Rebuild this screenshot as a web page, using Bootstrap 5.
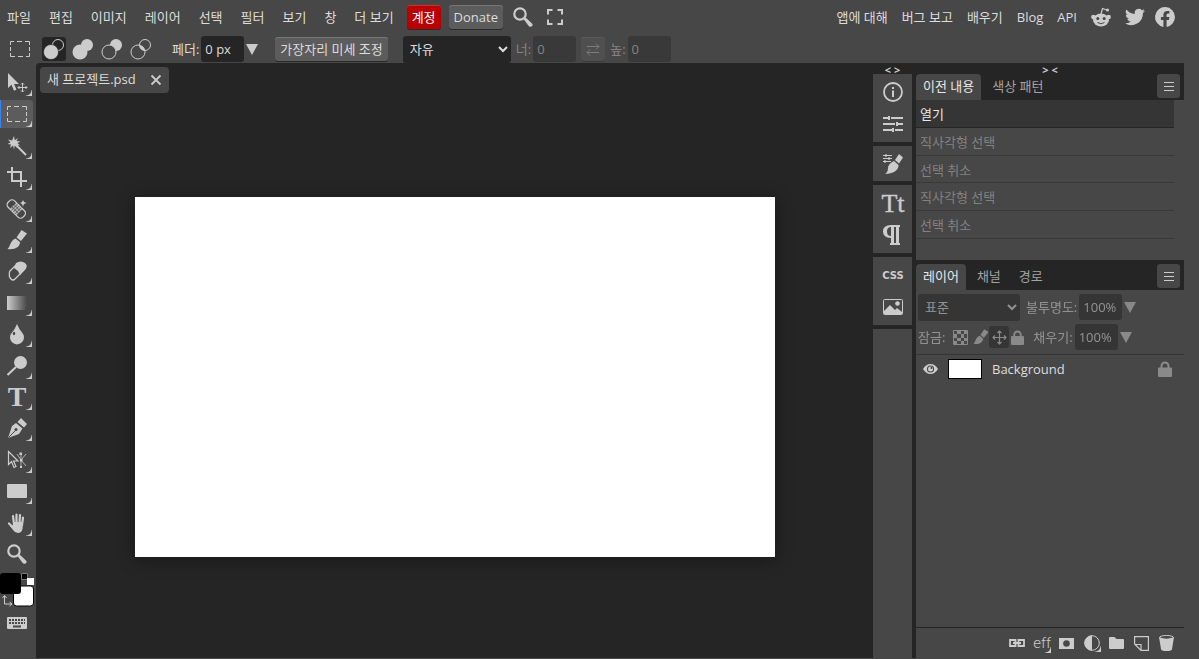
<!DOCTYPE html>
<html lang="ko">
<head>
<meta charset="utf-8">
<meta name="viewport" content="width=device-width, initial-scale=1">
<title>새 프로젝트.psd</title>
<link href="https://cdn.jsdelivr.net/npm/bootstrap@5.3.0/dist/css/bootstrap.min.css" rel="stylesheet">
<style>
:root{--base:#474747;--dark:#252525;--ink:#dddddd;--icon:#cccccc}
body{background:var(--base);color:var(--ink);font:13px/18px "Open Sans","Noto Sans CJK KR",sans-serif;overflow:hidden}
button,input,select{font:inherit;color:inherit}
svg{display:block;fill:var(--icon);flex:none;overflow:visible}
svg .ln{fill:none;stroke:var(--icon)}
a{color:inherit;text-decoration:none}
.plain{background:none;border:0;padding:0;border-radius:3px}
.topbar{height:33px;padding:0 24px 0 7px}
.menus{gap:18px;margin-right:13px}
.links{gap:14px}
.links a:last-child{margin-left:-4px}
.topicons{gap:14px;margin-left:10px}
.pushbtn{background:#5c5c5c;border:0;border-radius:3px;padding:0 5px;height:24px;box-shadow:inset 0 1px #757575,0 1px #2b2b2b}
.account{background:#bb0000;color:#fff;box-shadow:inset 0 1px #cc3333,0 1px #2b2b2b}
.optbar{height:30px;padding:2px 0 0 10px}
.modes{gap:5px;margin:0 19px 0 12px}
.refine{margin:0 15px 0 17px}
.fieldset-row{display:flex;align-items:center;gap:2px}
.mode{width:24px;height:24px}
.mode.active{background:var(--dark)}
.field{background:var(--dark);border:0;border-radius:3px;width:43px;height:26px;padding:0 4px}
.dropdown-field{background:var(--dark);border:0;border-radius:3px;height:27px;padding:0 3px}
.style-select{width:108px}
.blend-select{width:102px}
.sizes{opacity:.4;gap:5px;padding-left:5px}
.half{opacity:.5}
.toolbox{width:36px;padding-top:6px}
.tool{position:relative;width:33px;height:28px;margin-bottom:3px;padding-left:7px;display:flex;align-items:center;border-radius:0 4px 4px 0}
.tool:nth-child(5n+2),.tool:nth-child(5n+4){margin-bottom:4px}
.tool.active{background:#5c5c5c;box-shadow:inset 1px 0 #3b82f6}
.more::after{content:"";position:absolute;right:1px;bottom:1px;width:6px;height:6px;background:radial-gradient(circle at 0 0,transparent 5px,var(--icon) 6px)}
.swatches{margin:4px 0 9px}
.keys{margin-left:7px}
.stage{background:var(--dark);border-top-left-radius:4px;margin-bottom:1px}
.doctabs{height:33px;padding:4px}
.doctab{background:var(--base);border-radius:4px;height:26px;padding:0 8px 0 7px;gap:15px}
.doctab span{padding-bottom:2px}
.artboard{width:640px;height:360px;background:#fff;box-shadow:0 2px 16px #0006}
.dock{width:39px;background:var(--dark)}
.grip{height:11px;font-size:11px;line-height:11px;font-weight:700;padding-top:1px;text-align:center;color:var(--icon)}
.dockgroup{background:var(--base);padding:2px 0;margin-bottom:4px}
.dockgroup.single{padding-bottom:1px}
.dockgroup button{height:32px;width:39px;display:flex;align-items:center;justify-content:center}
.side{width:272px;background:var(--dark);padding-left:4px}
.tabs{height:26px;gap:4px}
.paneltab{height:26px;padding:0 7px 2px;border-radius:4px 4px 0 0;color:#a3a3a3}
.paneltab.active{background:var(--base);color:#e8e8e8}
.panelmenu{background:var(--base);width:23px;height:24px;margin-right:4px;display:flex;align-items:center;justify-content:center}
.panelbody{background:var(--base)}
.history{height:160px;margin-bottom:4px}
.history ul{margin-right:10px}
.history li{height:28px;line-height:28px;padding:0 4px;border-bottom:1px solid #393939;color:#828282}
.history li:nth-child(3){height:27px}
.history li.active{background:#353535;color:#e8e8e8;border-color:#252525}
.layerprops{padding:2px 0 2px 2px}
.blend{height:30px;gap:6px}
.locks{height:30px}
.lockset{gap:2px;margin:0 9px 0 8px}
.lockset button:first-child{margin-right:3px}
.layer{height:28px;border-top:1px solid #353535;padding:0 12px 0 7px;gap:10px}
.thumb{width:34px;height:20px;background:#fff;border:1px solid #000}
.actions{height:31px;border-top:1px solid #252525;padding:0 9px;gap:9px}
.actions button{width:16px;position:relative}
.actions .more::after{right:-1px;bottom:-1px}
.pinned{background:var(--dark);width:20px;height:22px;display:flex;align-items:center;justify-content:center}
.edge{width:15px}
</style>
<script src="https://cdn.jsdelivr.net/npm/bootstrap@5.3.0/dist/js/bootstrap.bundle.min.js"></script>
</head>
<body class="vh-100 d-flex flex-column">
<svg width="0" height="0" class="position-absolute" aria-hidden="true">
  <symbol id="glass" viewBox="0 0 20 20"><circle cx="7" cy="7" r="5.7" fill="none" stroke="#ccc" stroke-width="2.2"/><path d="M10.5 12l1.5-1.500 2 1.200 5 4.800q1.500 2-.5 3t-3-.8L12 14z"/></symbol>
  <symbol id="brush" viewBox="0 0 20 20"><path d="M14.500 0L20 3.500 14 11 9.500 7.500zM8.500 8.500L13 12c0 5-5 8-12.500 7 3-2 2-8 8-10.500z"/></symbol>
  <symbol id="lock" viewBox="0 0 14 16"><path d="M1 6.500h1.500V5a4.500 4.500 0 0 1 9 0v1.500H13q1 0 1 1V15q0 1-1 1H1q-1 0-1-1V7.500q0-1 1-1zm3.500 0h5V5a2.500 2.500 0 0 0-5 0z"/></symbol>
  <symbol id="down" viewBox="0 0 12 12"><path d="M0 1h12L6 12z"/></symbol>
  <symbol id="marquee" viewBox="0 0 20 16"><path d="M0.500 4V.5H4M7 .5h5M15 .5h4.500V4M19.500 6v4M19.500 12v3.500H16M13 15.500H8M5 15.500H.5V12M.5 10V6" fill="none" stroke="#ccc"/></symbol>
</svg>

<header>
  <div class="topbar d-flex align-items-center justify-content-between">
    <div class="d-flex align-items-center">
      <nav class="menus d-flex text-nowrap" aria-label="메뉴">
        <button class="plain">파일</button><button class="plain">편집</button><button class="plain">이미지</button><button class="plain">레이어</button><button class="plain">선택</button><button class="plain">필터</button><button class="plain">보기</button><button class="plain">창</button><button class="plain">더 보기</button>
      </nav>
      <button class="pushbtn account me-2">계정</button>
      <button class="pushbtn">Donate</button>
      <div class="topicons d-flex align-items-center">
        <button class="plain" aria-label="검색"><svg width="20" height="20"><use href="#glass"/></svg></button>
        <button class="plain" aria-label="전체 화면"><svg width="16" height="16" viewBox="0 0 16 16"><path class="ln" stroke-width="2" d="M1 5.500V1h4.500M10.500 1H15v4.500M15 10.500V15h-4.500M5.500 15H1v-4.500"/></svg></button>
      </div>
    </div>
    <nav class="links d-flex align-items-center text-nowrap" aria-label="링크">
      <a href="#">앱에 대해</a><a href="#">버그 보고</a><a href="#">배우기</a><a href="#">Blog</a><a href="#">API</a>
      <a href="#" aria-label="Reddit"><svg width="20" height="20" viewBox="0 0 20 20"><path class="ln" stroke-width="1.200" d="M10 7l1.500-5.500L16 3"/><circle cx="16.500" cy="3" r="1.600"/><circle cx="2.300" cy="10" r="2.200"/><circle cx="17.700" cy="10" r="2.200"/><ellipse cx="10" cy="13" rx="8" ry="6.500"/><g fill="#474747"><circle cx="6.800" cy="11.500" r="1.500"/><circle cx="13.200" cy="11.500" r="1.500"/></g><path d="M6.500 15.500q3.500 2.500 7 0" fill="none" stroke="#474747"/></svg></a>
      <a href="#" aria-label="Twitter"><svg width="20" height="20" viewBox="0 0 24 24"><path d="M24 4.600a10 10 0 0 1-2.800.8 5 5 0 0 0 2.100-2.700 10 10 0 0 1-3.100 1.200 4.900 4.900 0 0 0-8.400 4.500A14 14 0 0 1 1.700 3.100a4.900 4.900 0 0 0 1.500 6.600 5 5 0 0 1-2.200-.6 4.900 4.900 0 0 0 4 4.900 5 5 0 0 1-2.300.1 4.900 4.900 0 0 0 4.600 3.400A10 10 0 0 1 0 19.500 14 14 0 0 0 21.500 7.100 10 10 0 0 0 24 4.600z"/></svg></a>
      <a href="#" aria-label="Facebook"><svg width="20" height="20" viewBox="0 0 24 24"><path d="M24 12a12 12 0 1 0-13.900 11.900v-8.400H7.100V12h3V9.400c0-3 1.800-4.700 4.500-4.700 1.300 0 2.700.2 2.700.2v3h-1.500c-1.500 0-2 .9-2 1.900V12h3.400l-.5 3.500h-2.800v8.400A12 12 0 0 0 24 12z"/></svg></a>
    </nav>
  </div>
  <div class="optbar d-flex align-items-center text-nowrap">
    <svg width="20" height="16"><use href="#marquee"/></svg>
    <div class="modes d-flex">
      <button class="plain mode active" aria-label="새 선택"><svg width="24" height="24" viewBox="0 0 24 24"><circle class="ln" cx="16" cy="8" r="5.500"/><circle cx="9" cy="15" r="7.500" stroke="#252525" stroke-width=".6"/></svg></button>
      <button class="plain mode" aria-label="더하기"><svg width="24" height="24" viewBox="0 0 24 24"><circle cx="16" cy="8" r="6"/><circle cx="9" cy="15" r="7.500"/></svg></button>
      <button class="plain mode" aria-label="빼기"><svg width="24" height="24" viewBox="0 0 24 24"><circle cx="16" cy="8" r="6"/><circle cx="9" cy="15" r="7" fill="#474747" stroke="#ccc"/></svg></button>
      <button class="plain mode" aria-label="교차"><svg width="24" height="24" viewBox="0 0 24 24"><path d="M10.300 8.200Q15.500 9 16 13.700 11 13.500 10.300 8.200z"/><circle class="ln" cx="16" cy="8" r="5.500"/><circle class="ln" cx="9" cy="15" r="7"/></svg></button>
    </div>
    <div class="fieldset-row"><label for="feather">페더:</label><input id="feather" class="field" value="0 px"><button class="plain" aria-label="페더 값"><svg width="12" height="12"><use href="#down"/></svg></button></div>
    <button class="pushbtn refine">가장자리 미세 조정</button>
    <select class="dropdown-field style-select" aria-label="스타일"><option>자유</option></select>
    <div class="sizes d-flex align-items-center">
      <div class="fieldset-row"><label for="wd">너:</label><input id="wd" class="field" value="0"></div>
      <button class="pushbtn" aria-label="교환"><svg width="14" height="14" viewBox="0 0 14 14"><path class="ln" d="M1 4.500h12M10 1.500l3 3-3 3M13 10.500H1M4 7.500l-3 3 3 3"/></svg></button>
      <div class="fieldset-row"><label for="ht">높:</label><input id="ht" class="field" value="0"></div>
    </div>
  </div>
</header>

<main class="d-flex flex-grow-1">
  <aside class="toolbox flex-shrink-0" aria-label="도구">
    <div>
      <button class="plain tool more" aria-label="이동"><svg width="20" height="20" viewBox="0 0 20 20"><path d="M1 0v15l3.500-3.300 2.500 6 2.500-1.200L7 11h5z"/><path class="ln" d="M15.500 10v9M11 14.500h9M14 11.500l1.500-1.500 1.500 1.500M14 17.500l1.500 1.500 1.500-1.500M12.500 13L11 14.500l1.500 1.500M18.500 13l1.500 1.500-1.500 1.500"/></svg></button>
      <button class="plain tool more active" aria-label="직사각형 선택"><svg width="20" height="16"><use href="#marquee"/></svg></button>
      <button class="plain tool more" aria-label="마술봉"><svg width="20" height="20" viewBox="0 0 20 20"><path class="ln" stroke-width="2" d="M9 9l10 10"/><path d="M7 0l.8 4.200L11 2 9.500 5l4 .5L10.500 7l2.500 2.500L9.500 9l.5 3-2.300-2.500L7 13.500 6 9.500 3 12l1-3.500L.5 8l3-1.500L1 3.500l4 1z"/></svg></button>
      <button class="plain tool more" aria-label="자르기"><svg width="20" height="20" viewBox="0 0 20 20"><path class="ln" stroke-width="2" d="M5 0v14h15M0 5h14v15"/></svg></button>
      <button class="plain tool more" aria-label="복구"><svg width="20" height="20" viewBox="0 0 20 20"><g transform="rotate(45 10 10)"><rect class="ln" x="-1" y="6" width="21" height="9" rx="3.500" stroke-width="1.300"/><path d="M5 6h9v9H5z" opacity=".8"/><path d="M7 6v9M9.500 6v9M12 6v9M5 9h9M5 12h9" stroke="#474747" stroke-width=".7"/></g><path d="M16 1l1 2 2.500 1-2.500 1-1 2.500L15 5l-2-1 2-1z"/></svg></button>
      <button class="plain tool more" aria-label="브러시"><svg width="20" height="20"><use href="#brush"/></svg></button>
      <button class="plain tool more" aria-label="지우개"><svg width="20" height="20" viewBox="0 0 20 20"><path d="M9 2Q14-1 18 2t-1 8l-4 4-2-4-4-3z"/><path class="ln" stroke-width="1.300" d="M9 4l-6 6q-1 1-.5 6L4 18q2 2 4 0l6-6"/></svg></button>
      <button class="plain tool more" aria-label="그라디언트"><svg width="20" height="14" viewBox="0 0 20 14"><defs><linearGradient id="gr"><stop stop-color="#ccc"/><stop offset="1" stop-color="#474747"/></linearGradient></defs><path fill="url(#gr)" d="M0 0h20v14H0z"/></svg></button>
      <button class="plain tool more" aria-label="흐림"><svg width="20" height="20" viewBox="0 0 20 20"><path d="M10 0q2 5 5 8.500a7 7 0 1 1-10 0Q8 5 10 0z"/><ellipse cx="7" cy="9.500" rx="1.200" ry="1.800" fill="#474747"/></svg></button>
      <button class="plain tool more" aria-label="닷지"><svg width="20" height="20" viewBox="0 0 20 20"><circle cx="13.500" cy="6.500" r="6.500"/><path class="ln" stroke-width="2" d="M9 11l-8.500 8"/></svg></button>
      <button class="plain tool more" aria-label="문자"><svg width="20" height="20" viewBox="0 0 20 20"><text x="10" y="19" text-anchor="middle" font-family="Liberation Serif" font-weight="700" font-size="28">T</text></svg></button>
      <button class="plain tool more" aria-label="펜"><svg width="20" height="20" viewBox="0 0 20 20"><path d="M14 0l6 6-3 3.500L10.500 4zM9 5l6.500 5.500L12 16 1 20l4-12z"/><path d="M1.500 19.500L9 12" stroke="#474747"/><circle cx="9" cy="11.500" r="1.500" fill="#474747"/></svg></button>
      <button class="plain tool more" aria-label="경로 선택"><svg width="20" height="20" viewBox="0 0 20 20"><path class="ln" stroke-width="1.200" d="M1.500 1.500v13l3-3 2.500 6 2-1-2.500-5.500H11z"/><path class="ln" stroke-width=".8" d="M14 4v14M19 4l-5 6 5 6M10 4l4 6"/><path d="M12.500 2.500h2.500v2.500h-2.500zM13 9h2.500v2.500H13zM13 16h2v2h-2z"/></svg></button>
      <button class="plain tool more" aria-label="사각형"><svg width="20" height="14" viewBox="0 0 20 14"><rect width="20" height="14" rx="1"/></svg></button>
      <button class="plain tool more" aria-label="손"><svg width="20" height="20" viewBox="0 0 20 20"><g class="ln" stroke-width="2.200" stroke-linecap="round"><path d="M7 11L6 3M9.500 10V1.500M12.500 10l.5-8M15 12l1-7.500M6.500 15L2 10.500"/></g><path d="M6 9h10l-.5 7q-1 4-4.500 4-3 0-5-3l-3-4 3-1z"/></svg></button>
      <button class="plain tool" aria-label="돋보기"><svg width="20" height="20"><use href="#glass"/></svg></button>
    </div>
    <button class="plain swatches d-block" aria-label="색상"><svg width="36" height="36" viewBox="0 0 36 36"><path d="M21.500 1.500h6v6h-6z" fill="#000" stroke="#777"/><path d="M27 6h7v7h-7z" fill="#fff"/><rect x="13.500" y="14" width="20" height="20" rx="3" fill="#fff" stroke="#000"/><rect y="1" width="21" height="21" rx="3" fill="#000"/><path class="ln" d="M4.500 24v8h7M2.500 26l2-2.500 2 2.500M9.500 30l2.500 2-2.500 2"/></svg></button>
    <button class="plain keys d-block" aria-label="키보드"><svg width="20" height="12" viewBox="0 0 20 12"><rect width="20" height="12" rx="1"/><path d="M2 3h16M2 6h16" stroke="#474747" stroke-width="2" stroke-dasharray="2 1"/><path d="M6 9.500h8" stroke="#474747" stroke-width="2"/></svg></button>
  </aside>

  <section class="stage d-flex flex-grow-1 overflow-hidden">
    <div class="flex-grow-1 d-flex flex-column">
      <div class="doctabs d-flex">
        <div class="doctab d-flex align-items-center"><span>새 프로젝트.psd</span><button class="plain" aria-label="닫기"><svg width="10" height="10" viewBox="0 0 10 10"><path class="ln" stroke-width="1.800" d="M.5.5l9 9M9.500.5l-9 9"/></svg></button></div>
      </div>
      <div class="flex-grow-1 d-flex align-items-center justify-content-center"><div class="artboard flex-shrink-0"></div></div>
    </div>
    <div class="dock d-flex flex-column flex-shrink-0">
      <div class="grip">&lt; &gt;</div>
      <div class="dockgroup">
        <button class="plain" aria-label="정보"><svg width="20" height="20" viewBox="0 0 20 20"><circle class="ln" cx="10" cy="10" r="9" stroke-width="1.800"/><path d="M9 8.500h2V15H9zM9 5h2v2H9z"/></svg></button>
        <button class="plain" aria-label="조정"><svg width="20" height="16" viewBox="0 0 20 16"><path class="ln" stroke-width="2" d="M0 2h20M0 8h20M0 14h20"/><path d="M5 0h2v4H5zM13 6h2v4h-2zM9 12h2v4H9z"/><path fill="#474747" d="M7 0h1v4H7zM12 6h1v4h-1zM11 12h1v4h-1z"/></svg></button>
      </div>
      <div class="dockgroup single"><button class="plain" aria-label="브러시 설정"><svg width="20" height="20" viewBox="0 0 20 20"><path class="ln" stroke-width="1.200" d="M0 1.500h9M0 4.500h9M0 7.500h8M3 0v3M6 3v3M2 6v3"/><path d="M16 0l4 3.500-4 6L12 6zM11 7l4.500 4C16 16 10 20 2 20q3-2 3-6t6-7z"/></svg></button></div>
      <div class="dockgroup">
        <button class="plain" aria-label="문자"><svg width="20" height="20" viewBox="0 0 20 20"><text x="10" y="19" text-anchor="middle" font-family="Liberation Serif" font-size="26" stroke="#ccc" stroke-width=".4">Tt</text></svg></button>
        <button class="plain" aria-label="단락"><svg width="20" height="20" viewBox="0 0 20 20"><path d="M17 0v2h-1v16h1v2h-5v-2h1V2h-2v16h1v2H7v-2h1v-5Q0 13 0 6.500T8 0zM8 2Q4 2 4 6.500T8 11z"/></svg></button>
      </div>
      <div class="dockgroup">
        <button class="plain" aria-label="CSS"><svg width="22" height="12" viewBox="0 0 22 12"><text x="11" y="10" text-anchor="middle" font-family="DejaVu Sans" font-weight="700" font-size="10">CSS</text></svg></button>
        <button class="plain" aria-label="이미지"><svg width="20" height="16" viewBox="0 0 20 16"><rect class="ln" x=".5" y=".5" width="19" height="15" rx="1"/><path d="M1 15v-3l6-6 5 5 2-2 5 4v2z"/><circle cx="14.500" cy="4.500" r="2.300"/></svg></button>
      </div>
      <div class="panelbody flex-grow-1"></div>
    </div>
    <div class="side d-flex flex-column flex-shrink-0">
      <div class="grip">&gt; &lt;</div>
      <div class="tabs d-flex"><button class="plain paneltab active">이전 내용</button><button class="plain paneltab">색상 패턴</button><button class="plain panelmenu ms-auto" aria-label="패널 메뉴"><svg width="10" height="9" viewBox="0 0 10 9"><path class="ln" d="M0 .5h10M0 4.500h10M0 8.500h10"/></svg></button></div>
      <div class="panelbody history"><ul class="list-unstyled mb-0"><li class="active">열기</li><li>직사각형 선택</li><li>선택 취소</li><li>직사각형 선택</li><li>선택 취소</li></ul></div>
      <div class="tabs d-flex"><button class="plain paneltab active">레이어</button><button class="plain paneltab">채널</button><button class="plain paneltab">경로</button><button class="plain panelmenu ms-auto" aria-label="패널 메뉴"><svg width="10" height="9" viewBox="0 0 10 9"><path class="ln" d="M0 .5h10M0 4.500h10M0 8.500h10"/></svg></button></div>
      <div class="panelbody flex-grow-1 d-flex flex-column">
        <div class="layerprops half text-nowrap">
          <div class="blend d-flex align-items-center">
            <select class="dropdown-field blend-select" aria-label="혼합 모드"><option>표준</option></select>
            <div class="fieldset-row"><label for="op">불투명도:</label><input id="op" class="field" value="100%"><button class="plain" aria-label="불투명도 값"><svg width="12" height="12"><use href="#down"/></svg></button></div>
          </div>
          <div class="locks d-flex align-items-center"><span>잠금:</span>
            <div class="lockset d-flex align-items-center">
              <button class="plain" aria-label="투명 잠금"><svg width="15" height="15" viewBox="0 0 15 15"><path class="ln" d="M.5.5h14v14H.5z"/><path d="M4 1h4v3H4zM11 1h3v3h-3zM1 4h3v4H1zM8 4h3v4H8zM4 8h4v3H4zM11 8h3v3h-3zM1 11h3v3H1zM8 11h3v3H8z"/></svg></button>
              <button class="plain" aria-label="픽셀 잠금"><svg width="14" height="16" viewBox="0 0 18 20"><use href="#brush" width="20" height="20"/></svg></button>
              <button class="plain pinned" aria-label="위치 잠금"><svg width="15" height="15" viewBox="0 0 15 15"><path class="ln" stroke-width="1.200" d="M7.500 1v13M1 7.500h13M5.500 3l2-2 2 2M5.500 12l2 2 2-2M3 5.500l-2 2 2 2M12 5.500l2 2-2 2"/></svg></button>
              <button class="plain" aria-label="모두 잠금"><svg width="13" height="15"><use href="#lock"/></svg></button>
            </div>
            <div class="fieldset-row"><label for="fl">채우기:</label><input id="fl" class="field" value="100%"><button class="plain" aria-label="채우기 값"><svg width="12" height="12"><use href="#down"/></svg></button></div>
          </div>
        </div>
        <div class="layer d-flex align-items-center">
          <button class="plain" aria-label="표시"><svg width="15" height="12" viewBox="0 0 15 12"><path d="M0 6Q3 1 7.500 1T15 6q-3 5-7.500 5T0 6z"/><circle cx="7.500" cy="6" r="3.600" fill="#474747"/><circle cx="7.500" cy="6" r="2.500"/><circle cx="8.500" cy="5" r="1" fill="#474747"/></svg></button>
          <div class="thumb"></div><span>Background</span>
          <svg class="ms-auto half" width="14" height="16"><use href="#lock"/></svg>
        </div>
        <div class="actions mt-auto d-flex align-items-center justify-content-end">
          <button class="plain" aria-label="연결"><svg width="16" height="8" viewBox="0 0 16 8"><path class="ln" stroke-width="1.800" d="M6.500 3V1H1v6h5.500V5M9.500 3V1H15v6H9.500V5M4 4h8"/></svg></button>
          <button class="plain more" aria-label="효과"><svg width="16" height="18" viewBox="0 0 16 18"><text x="8" y="14" text-anchor="middle" font-family="Roboto" font-weight="300" font-size="15">eff</text></svg></button>
          <button class="plain" aria-label="마스크"><svg width="15" height="11" viewBox="0 0 15 11"><rect width="15" height="11"/><circle cx="7.500" cy="5.500" r="3.300" fill="#474747"/></svg></button>
          <button class="plain more" aria-label="조정 레이어"><svg width="16" height="16" viewBox="0 0 16 16"><circle class="ln" cx="8" cy="8" r="7.300"/><path d="M8 .5a7.500 7.500 0 0 0 0 15z"/></svg></button>
          <button class="plain" aria-label="새 폴더"><svg width="15" height="12" viewBox="0 0 15 12"><path d="M1 0h4.500l2 2H14q1 0 1 1v8q0 1-1 1H1q-1 0-1-1V1q0-1 1-1z"/></svg></button>
          <button class="plain" aria-label="새 레이어"><svg width="15" height="15" viewBox="0 0 15 15"><path class="ln" stroke-width="1.200" d="M.6.6h13.800v13.800H7L.6 8zM1 8.500h6V14"/></svg></button>
          <button class="plain" aria-label="삭제"><svg width="15" height="16" viewBox="0 0 15 16"><path d="M0 2Q7.500 5.500 15 2l-2 12q0 2-5.500 2T2 14z"/><ellipse class="ln" cx="7.500" cy="2.500" rx="7" ry="2"/></svg></button>
        </div>
      </div>
    </div>
  </section>
  <div class="edge flex-shrink-0"></div>
</main>
</body>
</html>
